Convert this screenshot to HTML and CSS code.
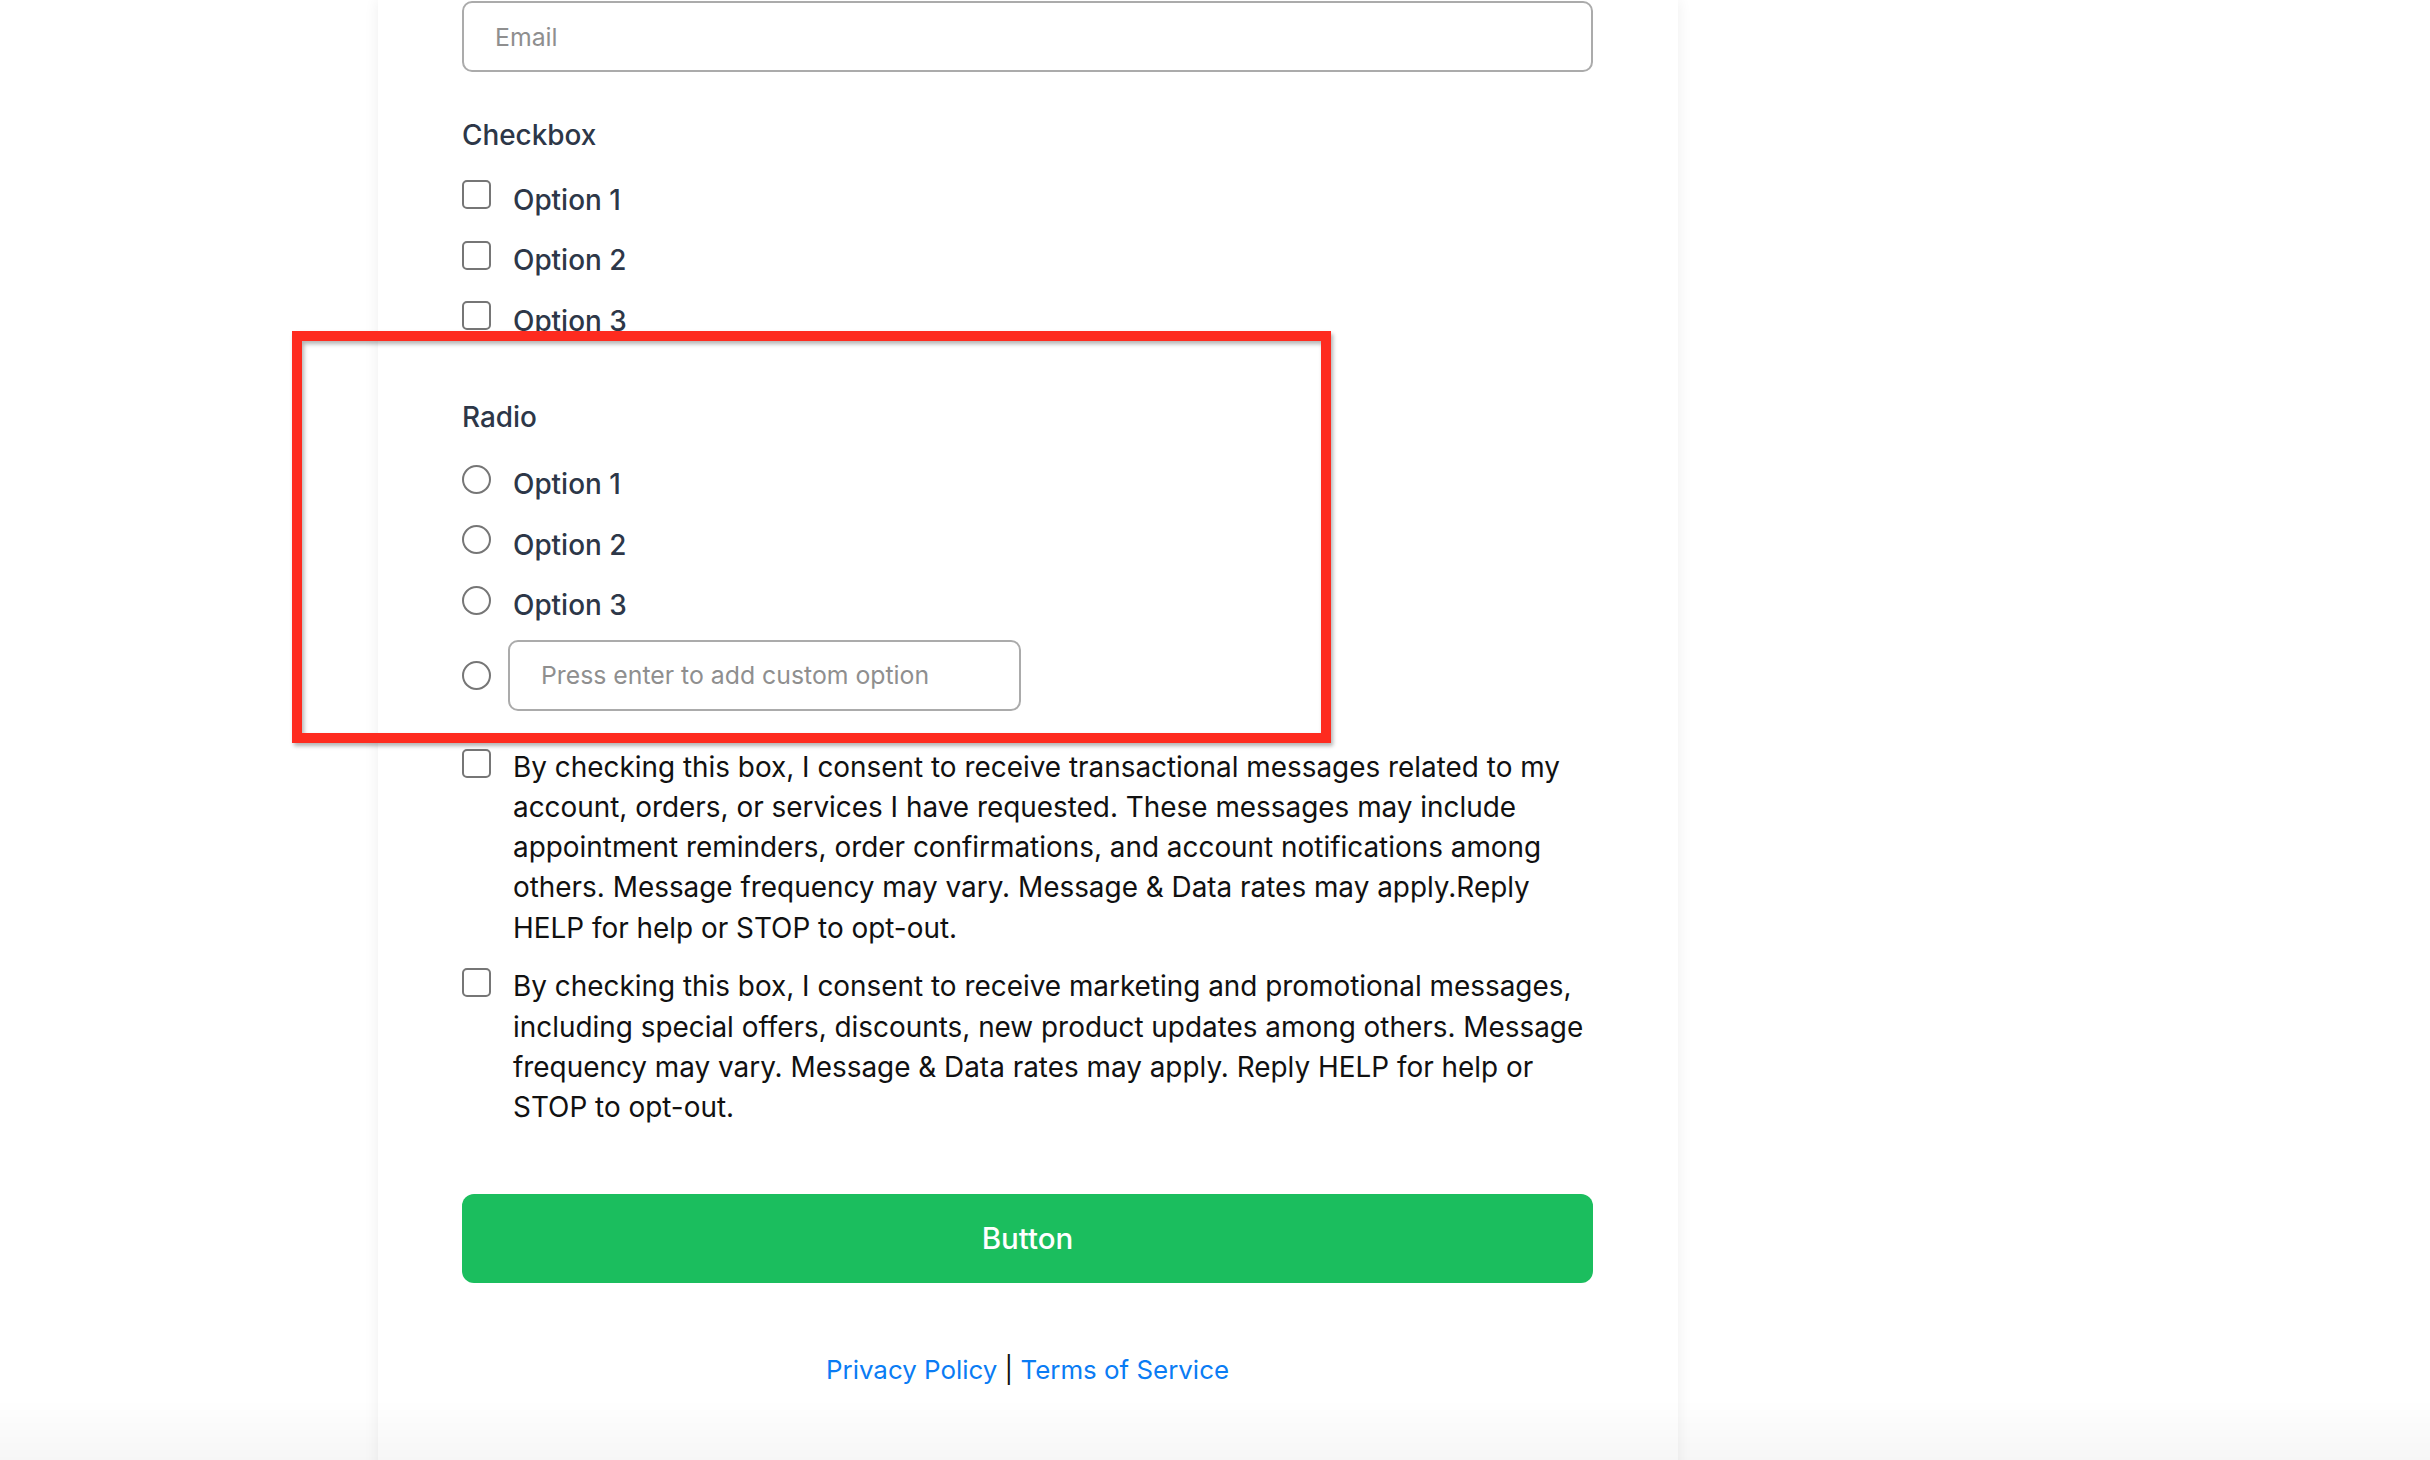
FILE: index.html
```html
<!DOCTYPE html>
<html lang="en">
<head>
  <meta charset="UTF-8" />
  <meta name="viewport" content="width=device-width, initial-scale=1.0"/>
  <title>Form</title>
  <link rel="stylesheet" href="styles.css">
</head>
<body>
  <form class="card" onsubmit="return false">
    <input class="text-input" type="email" placeholder="Email">

    <div class="group">
      <div class="group-title">Checkbox</div>
      <label class="option"><input type="checkbox" class="box"><span>Option 1</span></label>
      <label class="option"><input type="checkbox" class="box"><span>Option 2</span></label>
      <label class="option"><input type="checkbox" class="box"><span>Option 3</span></label>
    </div>

    <div class="group radio-group">
      <div class="group-title">Radio</div>
      <label class="option"><input type="radio" name="radio" class="box round"><span>Option 1</span></label>
      <label class="option"><input type="radio" name="radio" class="box round"><span>Option 2</span></label>
      <label class="option"><input type="radio" name="radio" class="box round"><span>Option 3</span></label>
      <div class="option custom">
        <input type="radio" name="radio" class="box round">
        <input class="text-input custom-input" type="text" placeholder="Press enter to add custom option">
      </div>
    </div>

    <label class="consent first">
      <input type="checkbox" class="box">
      <span>By checking this box, I consent to receive transactional messages related to my account, orders, or services I have requested. These messages may include appointment reminders, order confirmations, and account notifications among others. Message frequency may vary. Message &amp; Data rates may apply.Reply HELP for help or STOP to opt-out.</span>
    </label>
    <label class="consent second">
      <input type="checkbox" class="box">
      <span>By checking this box, I consent to receive marketing and promotional messages, including special offers, discounts, new product updates among others. Message frequency may vary. Message &amp; Data rates may apply. Reply HELP for help or STOP to opt-out.</span>
    </label>

    <button class="submit" type="submit">Button</button>

    <p class="legal"><a href="#">Privacy Policy</a> | <a href="#">Terms of Service</a></p>
  </form>

  <!-- highlight drawn on top of the radio section -->
  <div class="highlight"></div>
  <div class="bottom-fade"></div>
</body>
</html>
```

FILE: styles.css
```css
    body {
      margin: 0;
      background-color: #fff;
      font-family: Inter, "Noto Sans", sans-serif;
      color: #2d3748;
      overflow: hidden;
    }

    .card {
      box-sizing: border-box;
      width: 1300px;
      min-height: 1500px;
      margin-left: 378px;
      padding: 1px 85px 0 84px;
      background-color: #fff;
      box-shadow: 0 0 14px rgba(0, 0, 0, 0.07);
      display: flex;
      flex-direction: column;
    }

    .text-input {
      box-sizing: border-box;
      width: 100%;
      height: 71px;
      padding: 0 31px;
      border: 2px solid #ababab;
      border-radius: 10px;
      font-family: Inter, sans-serif;
      font-size: 24.8px;
      color: #2d3748;
      background: #fff;
      outline: none;
    }

    .text-input::placeholder {
      color: #8f8f8f;
    }

    .group {
      display: flex;
      flex-direction: column;
      margin-top: 42.5px;
    }

    .radio-group {
      margin-top: 46px;
    }

    .group-title {
      font-size: 27.9px;
      font-weight: 500;
      line-height: 40px;
      margin-bottom: 15px;
    }

    .radio-group .group-title {
      margin-bottom: 17px;
    }

    .option {
      display: flex;
      align-items: center;
      gap: 22px;
      height: 60.5px;
      font-size: 27.9px;
      font-weight: 500;
      cursor: pointer;
    }

    .option .box {
      margin-bottom: 10px;
    }

    .box {
      appearance: none;
      -webkit-appearance: none;
      flex: 0 0 auto;
      box-sizing: border-box;
      width: 29px;
      height: 29px;
      margin: 0;
      border: 2px solid #767676;
      border-radius: 5px;
      background: #fff;
      cursor: pointer;
    }

    .box.round {
      border-radius: 50%;
      border-width: 2px;
    }

    .option.custom {
      height: 71px;
      margin-top: 4px;
      gap: 17px;
    }

    .option.custom .box {
      margin-bottom: 0;
    }

    .custom-input {
      width: 513px;
    }

    .consent {
      display: flex;
      align-items: flex-start;
      gap: 22px;
      font-size: 27.9px;
      line-height: 40.3px;
      color: #111;
      cursor: pointer;
    }

    .consent .box {
      margin-top: 2px;
    }

    .consent.first {
      margin-top: 36px;
    }

    .consent.second {
      margin-top: 18.5px;
    }

    .submit {
      margin-top: 66px;
      height: 89px;
      width: 100%;
      border: none;
      border-radius: 12px;
      background-color: #1bbe5e;
      color: #fff;
      font-family: Inter, sans-serif;
      font-size: 29.5px;
      font-weight: 500;
      cursor: pointer;
    }

    .legal {
      margin: 67px 0 0;
      text-align: center;
      font-size: 25.9px;
      line-height: 40px;
      color: #111;
    }

    .legal a {
      color: #0a7cf4;
      text-decoration: none;
    }

    .highlight {
      position: absolute;
      left: 292px;
      top: 331px;
      width: 1039px;
      height: 412px;
      box-sizing: border-box;
      border: 10px solid #fe2b1f;
      box-shadow: 2px 3px 4px rgba(0, 0, 0, 0.3), inset 2px 3px 4px rgba(0, 0, 0, 0.3);
      pointer-events: none;
    }

    .bottom-fade {
      position: fixed;
      left: 0;
      right: 0;
      bottom: 0;
      height: 60px;
      background: linear-gradient(to bottom, rgba(0, 0, 0, 0), rgba(0, 0, 0, 0.035));
      pointer-events: none;
    }
```
